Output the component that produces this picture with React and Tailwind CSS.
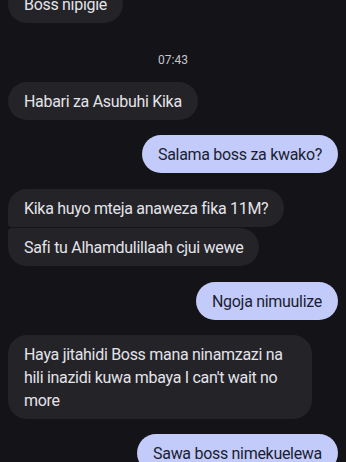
import React from 'react';

// Chat thread: received bubbles on the left, sent ones on the right
const messages = [
    { id: 1, side: 'in', text: 'Boss nipigie', className: '-mt-[15px]' },
    { id: 'ts', time: '07:43' },
    { id: 2, side: 'in', text: 'Habari za Asubuhi Kika', className: 'mt-[14px]' },
    { id: 3, side: 'out', text: 'Salama boss za kwako?', className: 'mt-[15px]' },
    { id: 4, side: 'in', text: 'Kika huyo mteja anaweza fika 11M?', className: 'mt-[16px]', group: 'first' },
    { id: 5, side: 'in', text: 'Safi tu Alhamdulillaah cjui wewe', className: 'mt-[1px]', group: 'last' },
    { id: 6, side: 'out', text: 'Ngoja nimuulize', className: 'mt-[16px]' },
    { id: 7, side: 'in', text: "Haya jitahidi Boss mana ninamzazi na hili inazidi kuwa mbaya I can't wait no more", className: 'mt-[15px]' },
    { id: 8, side: 'out', text: 'Sawa boss nimekuelewa', className: 'mt-[15px]' },
];

const Bubble = ({ msg }) => {
    const isOut = msg.side === 'out';
    let corners = 'rounded-[19px]';
    if (msg.group === 'first') corners = 'rounded-[19px] rounded-bl-[4px]';
    if (msg.group === 'last') corners = 'rounded-[19px] rounded-tl-[4px]';

    return (
        <div className={`flex ${isOut ? 'justify-end' : 'justify-start'} ${msg.className}`}>
            <div
                className={`max-w-[304px] px-4 py-[7.5px] text-[16px] leading-[23px] tracking-[-0.3px] ${corners} ${
                    isOut ? 'bg-[#c2cbfa] text-[#1b1e32]' : 'bg-[#232328] text-[#e4e3ea]'
                }`}
            >
                {msg.text}
            </div>
        </div>
    );
};

export default function App() {
    return (
        <div
            className="w-[346px] h-[462px] overflow-hidden bg-[#131318]"
            style={{ fontFamily: 'Roboto, "Noto Sans", sans-serif' }}
        >
            <div className="flex flex-col px-2">
                {messages.map((msg) =>
                    msg.time ? (
                        <div key={msg.id} className="mt-[29px] text-center text-[12px] leading-[16px] text-[#c6c5cc]">
                            {msg.time}
                        </div>
                    ) : (
                        <Bubble key={msg.id} msg={msg} />
                    )
                )}
            </div>
        </div>
    );
}
